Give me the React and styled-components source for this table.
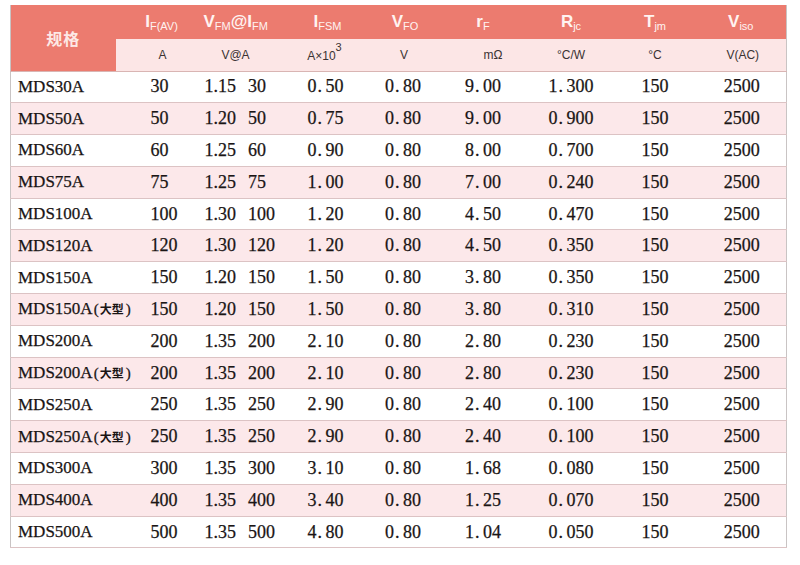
import React from "react";
import styled, { createGlobalStyle } from "styled-components";

const Global = createGlobalStyle`
  html, body { margin: 0; padding: 0; background: #ffffff; }
  body { font-family: "Liberation Sans", Arial, sans-serif; }
`;

const Page = styled.div`
  width: 800px;
  height: 565px;
  box-sizing: border-box;
  padding: 5px 0 0 10px;
  background: #ffffff;
`;

const Table = styled.table`
  width: 776px;
  border-collapse: collapse;
  table-layout: fixed;
  border-left: 1px solid #c9c4c4;
  border-right: 1px solid #c9c4c4;
  border-bottom: 1px solid #b9b3b3;
`;

const offset = (p) => `
  padding-left: ${Math.max(0, 2 * (p.$off || 0))}px;
  padding-right: ${Math.max(0, -2 * (p.$off || 0))}px;
`;

const HeadCell = styled.th`
  background: #ec7b6f;
  color: #fff3f1;
  font-family: "Liberation Sans", Arial, sans-serif;
  font-weight: 700;
  font-size: 17px;
  height: 33.5px;
  padding: 0;
  ${offset}
  text-align: center;
  vertical-align: middle;
  white-space: nowrap;
`;

const SpecHead = styled(HeadCell)`
  font-family: "Noto Sans CJK SC", "Liberation Sans", sans-serif;
  font-size: 16px;
  letter-spacing: 1px;
  color: #fde9e6;
  border-bottom: 1px solid #d9b5b3;
`;

const Sub = styled.sub`
  font-size: 11px;
  font-weight: 400;
  vertical-align: -3px;
  line-height: 0;
`;

const UnitCell = styled.td`
  background: #fce6e6;
  color: #3a3333;
  font-family: "Liberation Sans", Arial, sans-serif;
  font-size: 12px;
  height: 32px;
  padding: 0;
  ${offset}
  text-align: center;
  vertical-align: middle;
  border-bottom: 1px solid #d9b5b3;
  white-space: nowrap;
`;

const Sup = styled.sup`
  font-size: 11px;
  vertical-align: 9px;
  line-height: 0;
`;

const Row = styled.tr`
  background: ${(p) => (p.$pink ? "#fce8ea" : "#ffffff")};
`;

const Cell = styled.td`
  height: 30.8px;
  padding: 0;
  ${offset}
  text-align: center;
  vertical-align: middle;
  color: #1a1515;
  font-family: "Liberation Serif", "Times New Roman", serif;
  font-size: 18px;
  -webkit-text-stroke: 0.25px #1a1515;
  border-bottom: 1px solid #dcc3c4;
  white-space: nowrap;
`;

const LeftCell = styled(Cell)`
  text-align: left;
  padding-left: ${(p) => p.$pad}px;
  padding-right: 0;
`;

const ModelCell = styled(Cell)`
  text-align: left;
  padding-left: 7px;
  padding-right: 0;
  font-size: 17px;
`;

const Note = styled.span`
  font-size: 15px;
  margin-left: 1px;
`;

const Cjk = styled.span`
  font-family: "Noto Sans CJK SC", sans-serif;
  font-size: 12px;
  font-weight: 700;
  -webkit-text-stroke: 0;
  margin: 0 2px 0 1px;
`;

const Dot = styled.span`
  display: inline-block;
  width: 0.5em;
  text-align: left;
  padding-left: 1px;
  box-sizing: border-box;
`;

const Second = styled.span`
  margin-left: 12px;
`;

const Col = styled.col`
  width: ${(p) => p.$w}px;
`;

const Wide = ({ v }) => {
  const [a, b] = v.split(".");
  return (
    <span>
      {a}
      <Dot>.</Dot>
      {b}
    </span>
  );
};

const rows = [
  ["MDS30A", "", "30", "1.15", "30", "0.50", "0.80", "9.00", "1.300"],
  ["MDS50A", "", "50", "1.20", "50", "0.75", "0.80", "9.00", "0.900"],
  ["MDS60A", "", "60", "1.25", "60", "0.90", "0.80", "8.00", "0.700"],
  ["MDS75A", "", "75", "1.25", "75", "1.00", "0.80", "7.00", "0.240"],
  ["MDS100A", "", "100", "1.30", "100", "1.20", "0.80", "4.50", "0.470"],
  ["MDS120A", "", "120", "1.30", "120", "1.20", "0.80", "4.50", "0.350"],
  ["MDS150A", "", "150", "1.20", "150", "1.50", "0.80", "3.80", "0.350"],
  ["MDS150A", "大型", "150", "1.20", "150", "1.50", "0.80", "3.80", "0.310"],
  ["MDS200A", "", "200", "1.35", "200", "2.10", "0.80", "2.80", "0.230"],
  ["MDS200A", "大型", "200", "1.35", "200", "2.10", "0.80", "2.80", "0.230"],
  ["MDS250A", "", "250", "1.35", "250", "2.90", "0.80", "2.40", "0.100"],
  ["MDS250A", "大型", "250", "1.35", "250", "2.90", "0.80", "2.40", "0.100"],
  ["MDS300A", "", "300", "1.35", "300", "3.10", "0.80", "1.68", "0.080"],
  ["MDS400A", "", "400", "1.35", "400", "3.40", "0.80", "1.25", "0.070"],
  ["MDS500A", "", "500", "1.35", "500", "4.80", "0.80", "1.04", "0.050"],
];

const widths = [105, 88, 78, 84, 81, 83, 83, 85, 89];

const heads = [
  { m: "I", s: "F(AV)", off: 2 },
  { m: "V", s: "FM", m2: "@I", s2: "FM", off: -7 },
  { m: "I", s: "FSM", off: 4 },
  { m: "V", s: "FO", off: -1 },
  { m: "r", s: "F", off: -5 },
  { m: "R", s: "jc", off: 0 },
  { m: "T", s: "jm", off: 0 },
  { m: "V", s: "iso", off: -1 },
];

const units = [
  { t: "A", off: 3 },
  { t: "V@A", off: -7 },
  { t: "A×10", sup: "3", off: 1 },
  { t: "V", off: -2 },
  { t: "mΩ", off: 5 },
  { t: "°C/W", off: 0 },
  { t: "°C", off: 0 },
  { t: "V(AC)", off: 1 },
];

export default function App() {
  return (
    <Page>
      <Global />
      <Table>
        <colgroup>
          {widths.map((w, i) => (
            <Col key={i} $w={w} />
          ))}
        </colgroup>
        <thead>
          <tr>
            <SpecHead rowSpan={2}>规格</SpecHead>
            {heads.map((h, i) => (
              <HeadCell key={i} $off={h.off}>
                {h.m}
                <Sub>{h.s}</Sub>
                {h.m2}
                {h.s2 && <Sub>{h.s2}</Sub>}
              </HeadCell>
            ))}
          </tr>
          <tr>
            {units.map((u, i) => (
              <UnitCell key={i} $off={u.off}>
                {u.t}
                {u.sup && <Sup>{u.sup}</Sup>}
              </UnitCell>
            ))}
          </tr>
        </thead>
        <tbody>
          {rows.map((r, i) => (
            <Row key={i} $pink={i % 2 === 1}>
              <ModelCell>
                {r[0]}
                {r[1] && (
                  <Note>
                    (<Cjk>{r[1]}</Cjk>)
                  </Note>
                )}
              </ModelCell>
              <LeftCell $pad={35}>{r[2]}</LeftCell>
              <LeftCell $pad={1}>
                {r[3]}
                <Second>{r[4]}</Second>
              </LeftCell>
              <Cell $off={2}>
                <Wide v={r[5]} />
              </Cell>
              <Cell $off={-3}>
                <Wide v={r[6]} />
              </Cell>
              <Cell $off={-5}>
                <Wide v={r[7]} />
              </Cell>
              <Cell $off={0}>
                <Wide v={r[8]} />
              </Cell>
              <Cell $off={0}>150</Cell>
              <Cell $off={0}>2500</Cell>
            </Row>
          ))}
        </tbody>
      </Table>
    </Page>
  );
}
